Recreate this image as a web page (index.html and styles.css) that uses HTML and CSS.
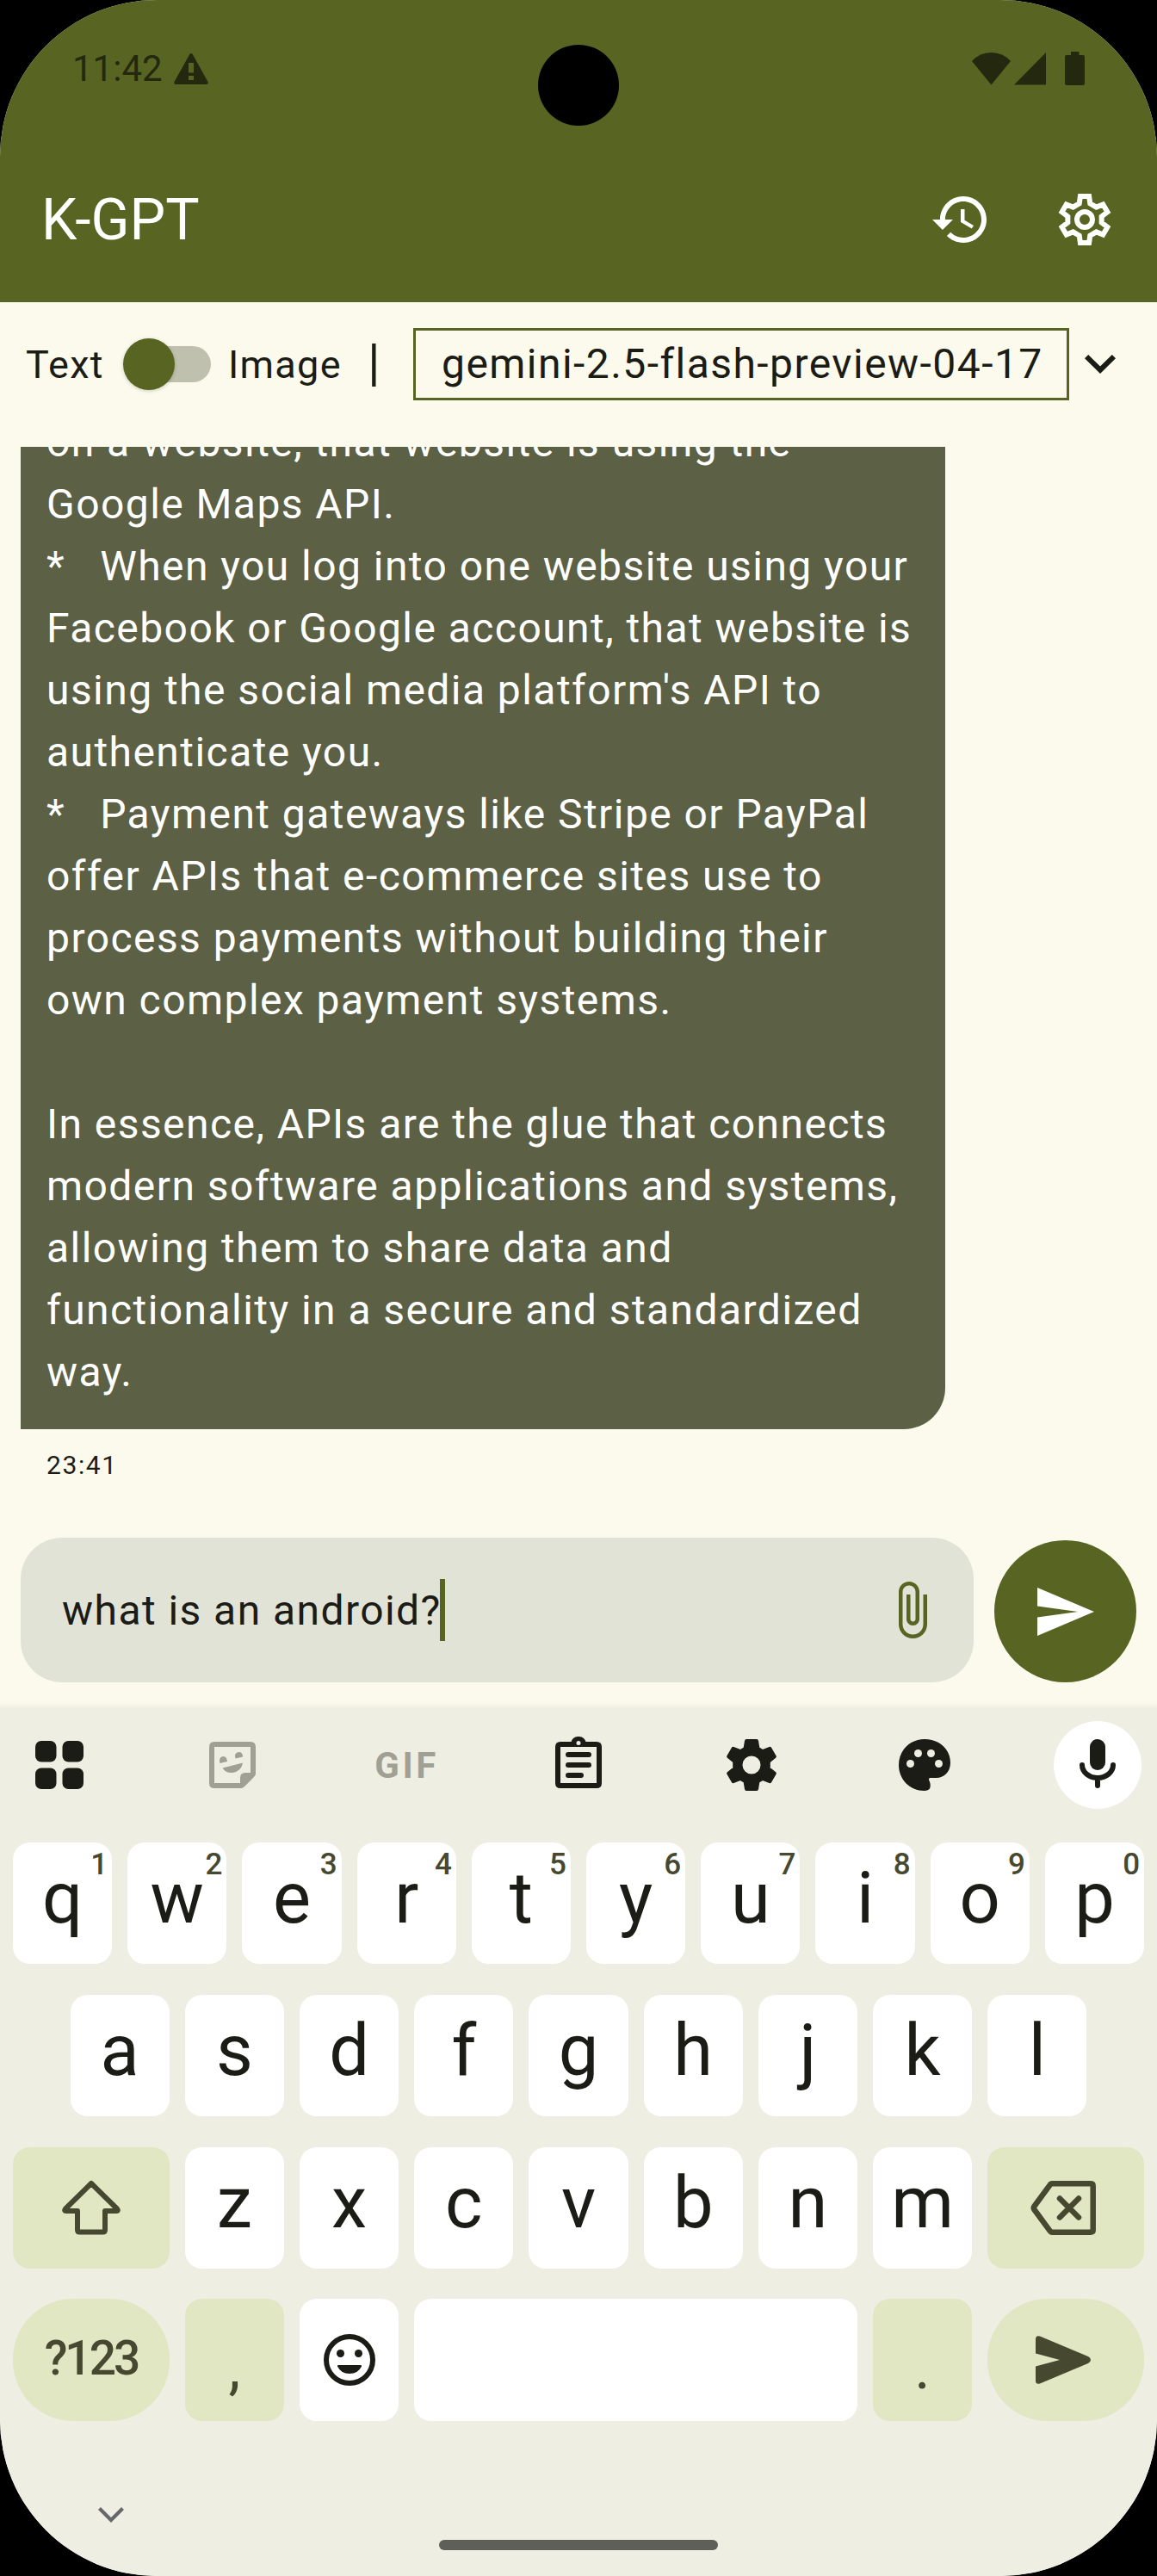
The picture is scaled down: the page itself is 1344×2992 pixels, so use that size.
FILE: index.html
```html
<!DOCTYPE html>
<html lang="en">
<head>
<meta charset="utf-8">
<title>K-GPT</title>
<link rel="stylesheet" href="styles.css">
</head>
<body>
<div class="screen">
  <header class="top">
    <div class="status">
      <span class="clock">11:42</span>
      <svg class="warn" width="40" height="36" viewBox="0 0 40 36"><path fill="currentColor" fill-rule="evenodd" d="M20 0a2 2 0 0 1 1.700 1L39.500 33q.8 3-1.500 3H2q-2.300 0-1.500-3L18.300 1A2 2 0 0 1 20 0zM17 11v11.500h6V11zM17 26v5h6v-5z"/></svg>
      <span class="spacer"></span>
      <svg class="wifi" width="45" height="38" viewBox="0 0 45 38"><path fill="currentColor" d="M22.500 37.500 0 10Q9 0 22.500 0T45 10z"/></svg>
      <svg class="signal" width="37" height="38" viewBox="0 0 37 38"><path fill="currentColor" d="M0 37.500 37 0V37.500z"/></svg>
      <svg class="battery" width="23" height="39" viewBox="0 0 23 39"><path fill="currentColor" d="M7 0h9.500v4H21q2 0 2 2v31q0 2-2 2H2q-2 0-2-2V6q0-2 2-2h5z"/></svg>
    </div>
    <div class="camera"></div>
    <div class="appbar">
      <h1 class="title">K-GPT</h1>
      <svg class="history" width="72" height="72" viewBox="0 0 24 24"><path fill="currentColor" d="M13 3c-4.970 0-9 4.030-9 9H1l3.890 3.890.07.14L9 12H6c0-3.870 3.130-7 7-7s7 3.130 7 7-3.130 7-7 7c-1.930 0-3.680-.79-4.940-2.060l-1.420 1.420C8.270 19.990 10.510 21 13 21c4.970 0 9-4.030 9-9s-4.030-9-9-9zm-1 5v5l4.280 2.540.72-1.210-3.500-2.080V8H12z"/></svg>
      <svg width="72" height="72" viewBox="0 0 24 24"><g fill="none" stroke="currentColor" stroke-width="2"><path d="M10.300 3h3.400l.4 2.800 2.400 1.400 2.600-1.050 1.700 2.950-2.250 1.700v2.400l2.250 1.700-1.700 2.950-2.600-1.050-2.400 1.400-.4 2.800h-3.400l-.4-2.800-2.400-1.400-2.600 1.050-1.700-2.950 2.250-1.700v-2.400L3.200 9.100l1.700-2.950L7.500 7.200l2.400-1.400z"/><circle cx="12" cy="12" r="3"/></g></svg>
    </div>
  </header>

  <section class="modes">
    <span class="mode">Text</span>
    <span class="switch"><span class="thumb"></span></span>
    <span class="mode">Image</span>
    <span class="divider">|</span>
    <span class="model">gemini-2.5-flash-preview-04-17</span>
    <svg class="caret" width="36" height="22" viewBox="0 0 36 22"><path fill="currentColor" d="M4.200 0 18 13.600 31.800 0 36 4.200 18 22 0 4.200z"/></svg>
  </section>

  <main class="chat">
    <div class="bubble">on a website, that website is using the
Google Maps API.
*   When you log into one website using your
Facebook or Google account, that website is
using the social media platform's API to
authenticate you.
*   Payment gateways like Stripe or PayPal
offer APIs that e-commerce sites use to
process payments without building their
own complex payment systems.

In essence, APIs are the glue that connects
modern software applications and systems,
allowing them to share data and
functionality in a secure and standardized
way.</div>
    <time class="sent">23:41</time>
  </main>

  <section class="composer">
    <div class="input">
      <span class="draft">what is an android?</span><span class="cursor"></span>
      <svg class="clip" width="72" height="72" viewBox="0 0 24 24"><path fill="currentColor" d="M16.500 6v11.500c0 2.210-1.790 4-4 4s-4-1.790-4-4V5c0-1.380 1.120-2.500 2.500-2.500s2.500 1.120 2.500 2.500v10.500c0 .55-.45 1-1 1s-1-.45-1-1V6H10v9.500c0 1.380 1.120 2.500 2.500 2.500s2.500-1.120 2.500-2.500V5c0-2.210-1.790-4-4-4S7 2.790 7 5v12.500c0 3.040 2.460 5.500 5.500 5.500s5.500-2.460 5.500-5.500V6h-1.500z"/></svg>
    </div>
    <div class="send"><svg width="66" height="56" viewBox="0 0 66 56"><path fill="currentColor" d="M0 0 66 28 0 56V34.500L47 28 0 21.500z"/></svg></div>
  </section>

  <section class="keyboard">
    <div class="tools">
      <span class="tool"><svg width="56" height="56" viewBox="0 0 56 56" fill="currentColor"><rect width="24.500" height="24.500" rx="7"/><rect x="31.500" width="24.500" height="24.500" rx="7"/><rect y="31.500" width="24.500" height="24.500" rx="7"/><rect x="31.500" y="31.500" width="24.500" height="24.500" rx="7"/></svg></span>
      <span class="tool faded"><svg width="54" height="54" viewBox="0 0 54 54"><path fill="currentColor" fill-rule="evenodd" d="M6 0h42q6 0 6 6v31q0 2-2 4L41 52q-2 2-4 2H6q-6 0-6-6V6q0-6 6-6zm0 6v42h30v-6q0-6 6-6h6V6z"/><path fill="currentColor" d="M12.500 25q-2-7 4-8 4 0 4.500 6zM30.500 19.500q-2-6.500 4-7.500 4.500 0 4.500 5.500zM15.500 30.500 39 24.500q-1.500 10-12 11.500-8 .5-11.500-5.500z"/></svg></span>
      <span class="tool faded gif">GIF</span>
      <span class="tool"><svg class="board" width="54" height="60" viewBox="0 0 54 60"><path fill="currentColor" fill-rule="evenodd" d="M6 6h12.500a9 9 0 0 1 17 0H48q6 0 6 6v42q0 6-6 6H6q-6 0-6-6V12q0-6 6-6zm0 6v42h42V12zM27 5a2.500 2.500 0 1 0 0 5 2.500 2.500 0 0 0 0-5z"/><path stroke="currentColor" stroke-width="6" stroke-linecap="round" d="M15 21h24M15 33h24M15 45h15"/></svg></span>
      <span class="tool"><svg width="60" height="60" viewBox="0 0 60 60"><path fill="currentColor" fill-rule="evenodd" stroke="currentColor" stroke-width="4" stroke-linejoin="round" d="M24 2h12l1.500 9 5.500 3.200 8.300-3.400 5.500 9.400-7 5.800v8l7 5.800-5.500 9.400-8.300-3.400-5.500 3.200L36 58H24l-1.500-9-5.500-3.200-8.300 3.400-5.500-9.400 7-5.800v-8l-7-5.800 5.500-9.400L17 14.200l5.500-3.200zM30 17.500a12.500 12.500 0 1 0 0 25 12.500 12.500 0 0 0 0-25z"/></svg></span>
      <span class="tool"><svg width="60" height="60" viewBox="0 0 60 60"><path fill="currentColor" d="M30 60C13 60 0 47 0 30S13 0 30 0c17 0 30 11.500 30 27.500C60 38 52.500 45 43.500 45H36q-2 1 0 4.500Q39 60 30 60z"/><g class="holes"><circle cx="13.500" cy="28.500" r="4.500"/><circle cx="22.500" cy="16.500" r="4.500"/><circle cx="37.500" cy="16.500" r="4.500"/><circle cx="46.500" cy="28.500" r="4.500"/></g></svg></span>
      <span class="tool mic"><svg width="42" height="60" viewBox="0 0 42 60"><rect x="12" y="0" width="18" height="36" rx="9" fill="currentColor"/><path fill="none" stroke="currentColor" stroke-width="6" stroke-linecap="round" d="M3 30a18 15 0 0 0 36 0M21 46v8"/></svg></span>
    </div>
    <div class="rows">
      <div class="row">
        <span class="key">q<sup class="hint">1</sup></span><span class="key">w<sup class="hint">2</sup></span><span class="key">e<sup class="hint">3</sup></span><span class="key">r<sup class="hint">4</sup></span><span class="key">t<sup class="hint">5</sup></span><span class="key">y<sup class="hint">6</sup></span><span class="key">u<sup class="hint">7</sup></span><span class="key">i<sup class="hint">8</sup></span><span class="key">o<sup class="hint">9</sup></span><span class="key">p<sup class="hint">0</sup></span>
      </div>
      <div class="row inset">
        <span class="key">a</span><span class="key">s</span><span class="key">d</span><span class="key">f</span><span class="key">g</span><span class="key">h</span><span class="key">j</span><span class="key">k</span><span class="key">l</span>
      </div>
      <div class="row">
        <span class="key wide tint icon"><svg width="68" height="66" viewBox="0 0 68 66"><path fill="none" stroke="currentColor" stroke-width="6" stroke-linejoin="round" d="M34 5 4 34.500Q2 37 5 37H18V59q0 2.500 2.500 2.500h27q2.500 0 2.500-2.500V37H63q3 0 1-2.500z"/></svg></span>
        <span class="key">z</span><span class="key">x</span><span class="key">c</span><span class="key">v</span><span class="key">b</span><span class="key">n</span><span class="key">m</span>
        <span class="key wide tint icon shifted"><svg width="76" height="63" viewBox="0 0 76 63"><path fill="none" stroke="currentColor" stroke-width="6.500" stroke-linejoin="round" d="M25 3.300H70q2.700 0 2.700 2.700V57q0 2.700-2.700 2.700H25q-1.500 0-2.400-1.500L4.500 33.500q-1.500-2 0-4L22.600 4.800Q23.500 3.300 25 3.300z"/><path stroke="currentColor" stroke-width="6.500" stroke-linecap="round" d="M34 20.500 56 42.500M56 20.500 34 42.500"/></svg></span>
      </div>
      <div class="row">
        <span class="key wide tint pill sym">?123</span>
        <span class="key tint punct">,</span>
        <span class="key icon"><svg width="60" height="60" viewBox="0 0 60 60"><circle cx="30" cy="30" r="27" fill="none" stroke="currentColor" stroke-width="6"/><g fill="currentColor"><circle cx="19.500" cy="22.500" r="4.500"/><circle cx="40.500" cy="22.500" r="4.500"/><path d="M17 36h26q1.500 0 1 1.500Q40 46 30 46T16 37.500Q15.500 36 17 36z"/></g></svg></span>
        <span class="key space"></span>
        <span class="key tint punct">.</span>
        <span class="key wide tint pill icon shifted"><svg width="64" height="56" viewBox="0 0 64 56"><path fill="currentColor" d="M5 .5 61 24q3 1.500 3 4t-3 4L5 55.500Q0 57 0 52V35.500L28 28 0 20.500V4Q0-1 5 .5z"/></svg></span>
      </div>
    </div>
    <div class="nav">
      <svg class="hide" width="30" height="18" viewBox="0 0 30 18"><path fill="none" stroke="currentColor" stroke-width="4.200" d="M1.500 1.500 15 15 28.500 1.500"/></svg>
      <span class="home"></span>
    </div>
  </section>
</div>
</body>
</html>
```
FILE: styles.css
```css
* { box-sizing: border-box; }
html { background: #000; }
body { margin: 0; background: #000; font-family: Roboto, "Liberation Sans", sans-serif; color: #1b1c15; }
svg { display: block; flex: none; }

.screen {
  position: relative;
  width: 1344px;
  height: 2992px;
  display: flex;
  flex-direction: column;
  overflow: hidden;
  border-radius: 182px;
  background: #fcfaec;
}

/* header */
.top { background: #586421; height: 351px; flex: none; }
.status { display: flex; align-items: center; height: 159px; padding: 0 84px; color: #24280f; }
.clock { font-size: 42px; width: 118px; }
.spacer { flex: 1; }
.signal { margin-left: 4px; }
.battery { margin-left: 22px; }
.camera { position: absolute; left: 625px; top: 52px; width: 94px; height: 94px; border-radius: 50%; background: #000; }
.appbar { display: flex; align-items: center; height: 192px; padding: 0 48px; color: #fff; }
.title { flex: 1; margin: 0; font-size: 66px; font-weight: 400; }
.history { margin-right: 72px; }

/* mode row */
.modes {
  display: grid;
  grid-template-columns: 113px 122px 162px 53px 762px 1fr;
  align-items: center;
  height: 144px;
  padding-left: 30px;
  flex: none;
}
.mode { font-size: 45px; letter-spacing: 1.300px; }
.switch { width: 102px; height: 60px; display: flex; align-items: center; }
.switch::after { content: ""; width: 92px; height: 42px; margin-left: -50px; border-radius: 21px; background: #c0c0ae; }
.thumb { flex: none; width: 60px; height: 60px; border-radius: 50%; background: #586421; box-shadow: 0 1px 4px rgba(0, 0, 0, .2); z-index: 1; }
.divider { font-size: 60px; line-height: 60px; margin-top: -4px; }
.model { height: 84px; border: 3px solid #586421; padding: 0 30px; font-size: 48px; line-height: 78px; letter-spacing: 1.450px; white-space: nowrap; }
.caret { margin-left: 18px; }

/* conversation */
.chat { margin-top: 24px; height: 1243px; flex: none; overflow: hidden; display: flex; flex-direction: column; justify-content: flex-end; align-items: flex-start; padding-left: 24px; }
.bubble { width: 1074px; padding: 30px; background: #5c6044; color: #fff; border-radius: 48px 48px 48px 0; font-size: 48px; line-height: 72px; letter-spacing: 1.440px; white-space: pre; }
.sent { margin: 24px 0 42px 30px; font-size: 30px; line-height: 36px; letter-spacing: 1.600px; }

/* composer */
.composer { display: flex; align-items: flex-end; gap: 24px; height: 216px; padding: 24px; flex: none; }
.input { width: 1107px; height: 168px; border-radius: 48px; background: #e2e3d7; display: flex; align-items: center; padding: 0 36px 0 48px; }
.draft { font-size: 48px; letter-spacing: 1.440px; white-space: nowrap; }
.cursor { width: 6px; height: 72px; margin-left: -2px; background: #586421; }
.clip { margin-left: auto; color: #586421; }
.send { width: 165px; height: 165px; border-radius: 50%; background: #586421; color: #fff; display: flex; align-items: center; justify-content: center; }

/* keyboard */
.keyboard { flex: 1; background: linear-gradient(#fcfaec, #eeeee2 6px); }
.tools { display: flex; justify-content: space-between; align-items: center; height: 144px; padding: 0 18px; }
.tool { width: 102px; height: 102px; display: flex; align-items: center; justify-content: center; }
.board { margin-top: -6px; }
.faded { color: #a0a095; }
.gif { font-size: 42px; font-weight: 700; letter-spacing: 3.500px; padding-left: 3px; }
.mic { background: #fff; border-radius: 50%; }
.holes { fill: #eeeee2; }
.rows { display: flex; flex-direction: column; gap: 35.600px; padding: 18px 15px 0; }
.row { display: flex; gap: 18px; height: 141.200px; }
.inset { padding: 0 66.600px; }
.key { position: relative; flex: 1 1 0; display: flex; align-items: center; justify-content: center; padding-bottom: 12px; background: #fff; border-radius: 20px; font-size: 83px; line-height: 1; }
.hint { position: absolute; top: 9px; right: 5px; font-size: 35px; font-weight: 500; line-height: 34px; color: #464930; }
.wide { flex: 0 0 181.800px; }
.space { flex: 0 0 514.800px; }
.tint { background: #e1e7c3; color: #464930; }
.icon { padding-bottom: 0; }
.shifted { padding-right: 6px; }
.pill { border-radius: 70px; }
.sym { font-size: 55px; font-weight: 500; letter-spacing: -3px; padding-bottom: 2px; }
.punct { font-size: 70px; padding: 18px 0 0; }
.nav { position: relative; display: flex; justify-content: center; padding-top: 138px; }
.home { width: 324px; height: 12px; border-radius: 6px; background: #5f5f59; }
.hide { position: absolute; left: 114px; top: 100px; color: #66676a; }
```
